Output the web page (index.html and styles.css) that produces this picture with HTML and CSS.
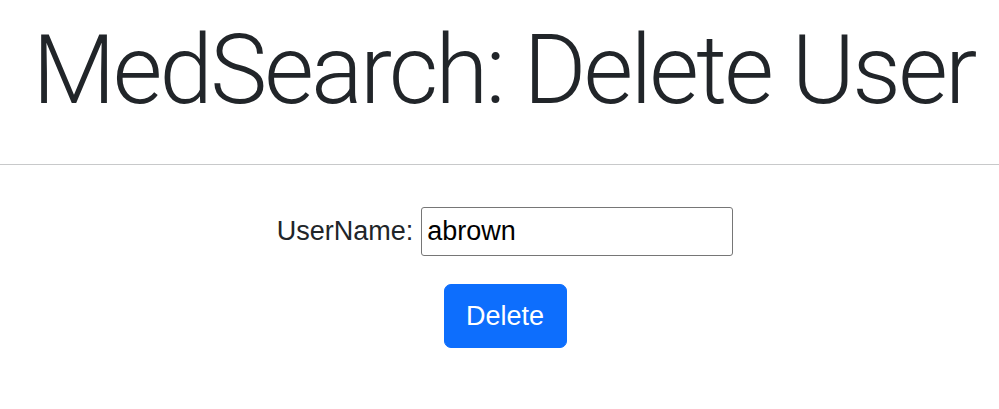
FILE: index.html
```html
<!DOCTYPE html>
<html>
<head>
<meta charset="utf-8">
<link rel="stylesheet" href="styles.css">
</head>
<body>
<header class="head">
  <h1 class="title">MedSearch: Delete User</h1>
</header>
<hr class="rule">
<form class="form">
  <div class="row">
    <label class="label" for="user">UserName:</label>
    <input class="field" id="user" type="text" value="abrown">
  </div>
  <button class="btn" type="button">Delete</button>
</form>
</body>
</html>
```
FILE: styles.css
```css
html, body {
  margin: 0;
  padding: 0;
  background: #fff;
}
body {
  font-family: "Liberation Sans", Arial, sans-serif;
  color: #212529;
}
.head {
  padding-left: 8px;
  text-align: center;
}
.title {
  margin: 13px 0 0;
  font-family: Roboto, "Liberation Sans", sans-serif;
  font-weight: 300;
  font-size: 96px;
  line-height: 1.2;
  letter-spacing: -2.75px;
  white-space: nowrap;
  color: #212529;
}
.rule {
  margin: 36px 0 0;
  border: 0;
  border-top: 1px solid #c8c9ca;
  height: 0;
}
.form {
  padding-left: 11px;
  margin-top: 42px;
  display: flex;
  flex-direction: column;
  align-items: center;
  gap: 28px;
}
.row {
  display: flex;
  align-items: center;
  gap: 8px;
}
.label {
  font-size: 27px;
  color: #212529;
}
.field {
  width: 312px;
  height: 49px;
  box-sizing: border-box;
  border: 1px solid #767676;
  border-radius: 3px;
  padding: 0 5px;
  font-family: "Liberation Sans", Arial, sans-serif;
  font-size: 27px;
  color: #000;
}
.btn {
  width: 123px;
  height: 64px;
  box-sizing: border-box;
  border: 1px solid #0d6efd;
  border-radius: 7px;
  background: #0d6efd;
  color: #fff;
  font-family: "Liberation Sans", Arial, sans-serif;
  font-size: 27px;
  padding: 0;
}
```
